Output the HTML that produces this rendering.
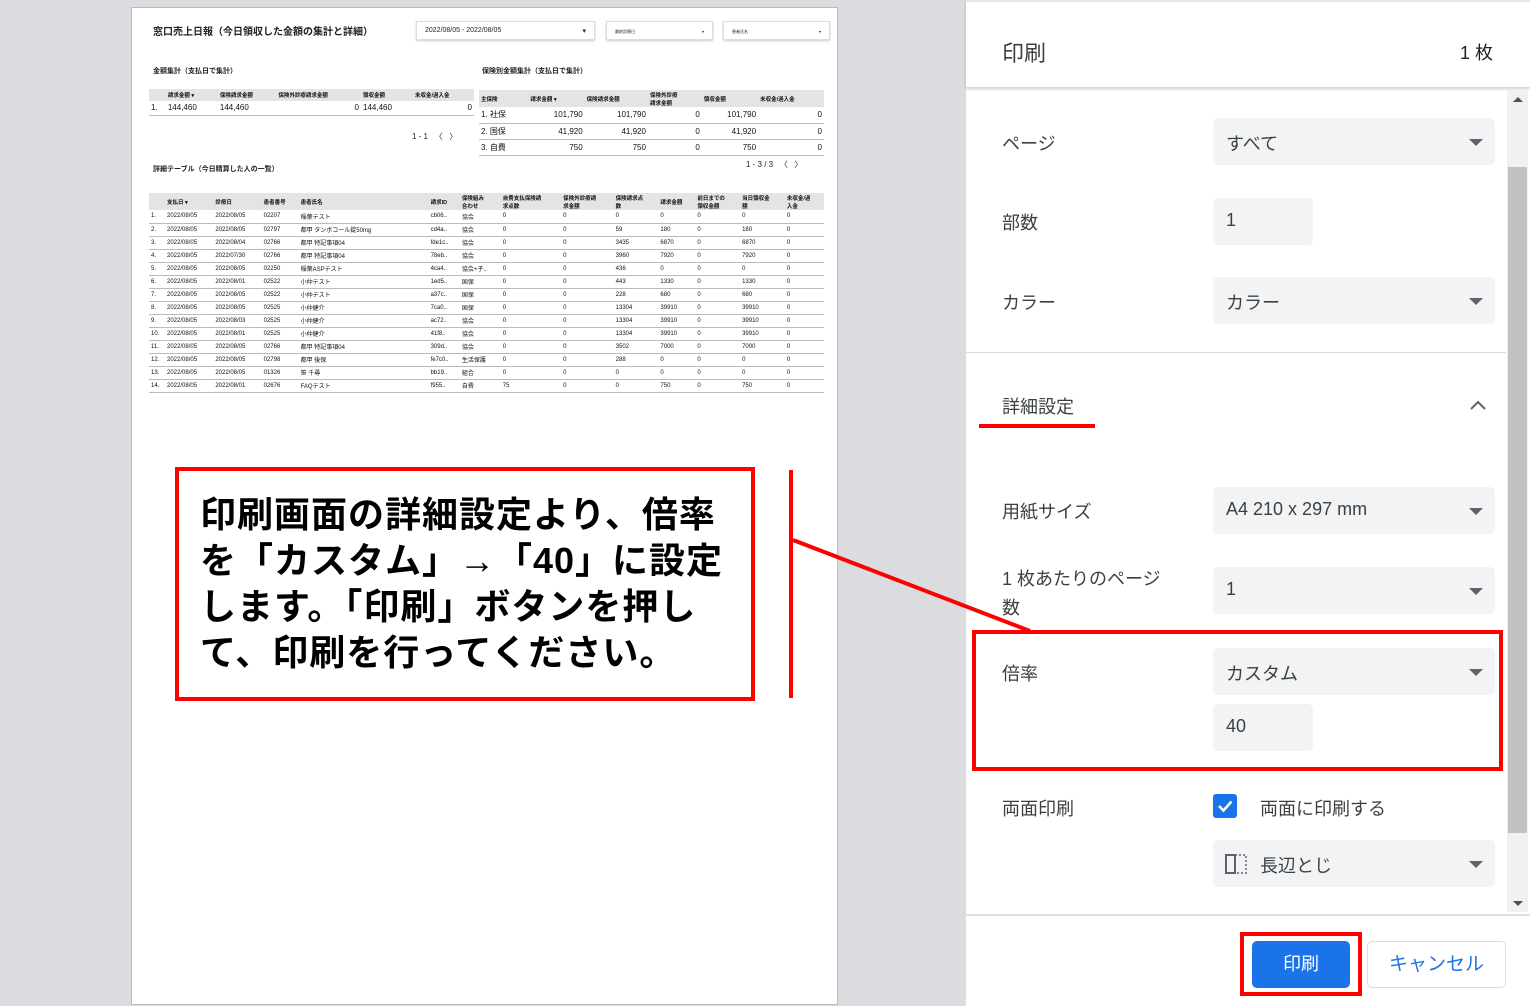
<!DOCTYPE html>
<html><head><meta charset="utf-8">
<style>
*{margin:0;padding:0;box-sizing:border-box}
body{width:1530px;height:1006px;background:#dadce0;position:relative;overflow:hidden;font-family:"Liberation Sans","Noto Sans CJK JP",sans-serif;color:#202124}
.abs{position:absolute}
#page{left:131px;top:7px;width:707px;height:998px;background:#fff;border:1px solid #bbb}
.t{font-size:7px;color:#222;position:absolute;white-space:nowrap}
table{border-collapse:collapse;font-size:6.5px;position:absolute;font-family:"Liberation Sans","Noto Sans CJK JP",sans-serif;color:#111}
td,th{padding:0 2px;white-space:nowrap;text-align:left}
th{background:#e4e4e4;font-weight:bold;font-size:5.5px}
tr.r td{border-bottom:1px solid #bbb}
#panel{left:966px;top:0;width:564px;height:1006px;background:#fff}
.lab{position:absolute;left:1002px;font-size:18px;color:#3c4043}
.sel{position:absolute;left:1213px;width:282px;height:47px;background:#f1f3f4;border-radius:5px;font-size:18px;color:#3c4043;padding:12px 0 0 13px}
.sel.dd:after{content:"";position:absolute;right:12px;top:21px;border-left:7px solid transparent;border-right:7px solid transparent;border-top:7px solid #5f6368}
.red{position:absolute;border:4px solid #f00}
</style></head><body>
<div id="page" class="abs"></div>
<div class="t" style="left:153px;top:23px;font-size:10px;font-weight:bold">窓口売上日報（今日領収した金額の集計と詳細）</div>
<div class="abs" style="left:416px;top:21px;width:179px;height:19px;border:1px solid #ddd;box-shadow:0 1px 2px #ccc;font-size:7px;padding:5px 8px">2022/08/05 - 2022/08/05<span style="float:right">▾</span></div>
<div class="abs" style="left:606px;top:21px;width:107px;height:19px;border:1px solid #ddd;box-shadow:0 1px 2px #ccc;font-size:4px;padding:7px 8px">最終診療日 <span style="float:right">▾</span></div>
<div class="abs" style="left:723px;top:21px;width:107px;height:19px;border:1px solid #ddd;box-shadow:0 1px 2px #ccc;font-size:4px;padding:7px 8px">患者氏名 <span style="float:right">▾</span></div>
<div class="t" style="left:153px;top:66px;font-weight:bold">金額集計（支払日で集計）</div>
<div class="t" style="left:482px;top:66px;font-weight:bold">保険別金額集計（支払日で集計）</div>
<table style="left:149px;top:89px;width:325px">
<tr><th style="height:12px"></th><th>請求金額 ▾</th><th>保険請求金額</th><th>保険外診療請求金額</th><th>領収金額</th><th>未収金/過入金</th></tr>
<tr class="r"><td style="height:14px;font-size:8px">1.</td><td style="font-size:8px">144,460</td><td style="font-size:8px">144,460</td><td style="font-size:8px;text-align:right">0</td><td style="font-size:8px">144,460</td><td style="font-size:8px;text-align:right">0</td></tr></table>
<div class="t" style="left:412px;top:131px;font-size:8px">1 - 1 &nbsp; 〈 &nbsp; 〉</div>
<table style="left:479px;top:90px;width:345px;font-size:8px">
<tr><th style="height:17px">主保険</th><th>請求金額 ▾</th><th>保険請求金額</th><th>保険外診療<br>請求金額</th><th>領収金額</th><th>未収金/過入金</th></tr>
<tr class="r"><td style="height:16px;font-size:8px">1. 社保</td><td style="text-align:right;font-size:8px">101,790</td><td style="text-align:right;font-size:8px">101,790</td><td style="text-align:right;font-size:8px">0</td><td style="text-align:right;font-size:8px">101,790</td><td style="text-align:right;font-size:8px">0</td></tr>
<tr class="r"><td style="height:16px;font-size:8px">2. 国保</td><td style="text-align:right;font-size:8px">41,920</td><td style="text-align:right;font-size:8px">41,920</td><td style="text-align:right;font-size:8px">0</td><td style="text-align:right;font-size:8px">41,920</td><td style="text-align:right;font-size:8px">0</td></tr>
<tr class="r"><td style="height:16px;font-size:8px">3. 自費</td><td style="text-align:right;font-size:8px">750</td><td style="text-align:right;font-size:8px">750</td><td style="text-align:right;font-size:8px">0</td><td style="text-align:right;font-size:8px">750</td><td style="text-align:right;font-size:8px">0</td></tr></table>
<div class="t" style="left:746px;top:159px;font-size:8px">1 - 3 / 3 &nbsp; 〈 &nbsp; 〉</div>
<div class="t" style="left:153px;top:164px;font-weight:bold">詳細テーブル（今日精算した人の一覧）</div>
<table style="left:149px;top:193px;width:675px;font-size:6px">
<tr><th style="height:17px;width:16px"></th><th>支払日 ▾</th><th>診療日</th><th>患者番号</th><th style="width:130px">患者氏名</th><th>請求ID</th><th>保険組み<br>合わせ</th><th>自費支払保険請<br>求点数</th><th>保険外診療請<br>求金額</th><th>保険請求点<br>数</th><th>請求金額</th><th>前日までの<br>領収金額</th><th>当日領収金<br>額</th><th>未収金/過<br>入金</th></tr>
<tr class="r"><td style="height:13px">1.</td><td>2022/08/05</td><td>2022/08/05</td><td>02207</td><td>稲葉テスト</td><td>cb06..</td><td>協会</td><td>0</td><td>0</td><td>0</td><td>0</td><td>0</td><td>0</td><td>0</td></tr>
<tr class="r"><td style="height:13px">2.</td><td>2022/08/05</td><td>2022/08/05</td><td>02797</td><td>都甲 タンボコール錠50mg</td><td>cd4a..</td><td>協会</td><td>0</td><td>0</td><td>59</td><td>180</td><td>0</td><td>180</td><td>0</td></tr>
<tr class="r"><td style="height:13px">3.</td><td>2022/08/05</td><td>2022/08/04</td><td>02766</td><td>都甲 特記事項04</td><td>fde1c..</td><td>協会</td><td>0</td><td>0</td><td>3435</td><td>6870</td><td>0</td><td>6870</td><td>0</td></tr>
<tr class="r"><td style="height:13px">4.</td><td>2022/08/05</td><td>2022/07/30</td><td>02766</td><td>都甲 特記事項04</td><td>78eb..</td><td>協会</td><td>0</td><td>0</td><td>3960</td><td>7920</td><td>0</td><td>7920</td><td>0</td></tr>
<tr class="r"><td style="height:13px">5.</td><td>2022/08/05</td><td>2022/08/05</td><td>02250</td><td>稲葉ASPテスト</td><td>4ca4..</td><td>協会+子..</td><td>0</td><td>0</td><td>436</td><td>0</td><td>0</td><td>0</td><td>0</td></tr>
<tr class="r"><td style="height:13px">6.</td><td>2022/08/05</td><td>2022/08/01</td><td>02522</td><td>小仲テスト</td><td>1ed5..</td><td>国保</td><td>0</td><td>0</td><td>443</td><td>1330</td><td>0</td><td>1330</td><td>0</td></tr>
<tr class="r"><td style="height:13px">7.</td><td>2022/08/05</td><td>2022/08/05</td><td>02522</td><td>小仲テスト</td><td>a37c..</td><td>国保</td><td>0</td><td>0</td><td>228</td><td>680</td><td>0</td><td>680</td><td>0</td></tr>
<tr class="r"><td style="height:13px">8.</td><td>2022/08/05</td><td>2022/08/05</td><td>02525</td><td>小仲健介</td><td>7ca0..</td><td>国保</td><td>0</td><td>0</td><td>13304</td><td>39910</td><td>0</td><td>39910</td><td>0</td></tr>
<tr class="r"><td style="height:13px">9.</td><td>2022/08/05</td><td>2022/08/03</td><td>02525</td><td>小仲健介</td><td>ac72..</td><td>協会</td><td>0</td><td>0</td><td>13304</td><td>39910</td><td>0</td><td>39910</td><td>0</td></tr>
<tr class="r"><td style="height:13px">10.</td><td>2022/08/05</td><td>2022/08/01</td><td>02525</td><td>小仲健介</td><td>41f8..</td><td>協会</td><td>0</td><td>0</td><td>13304</td><td>39910</td><td>0</td><td>39910</td><td>0</td></tr>
<tr class="r"><td style="height:13px">11.</td><td>2022/08/05</td><td>2022/08/05</td><td>02766</td><td>都甲 特記事項04</td><td>309d..</td><td>協会</td><td>0</td><td>0</td><td>3502</td><td>7000</td><td>0</td><td>7000</td><td>0</td></tr>
<tr class="r"><td style="height:13px">12.</td><td>2022/08/05</td><td>2022/08/05</td><td>02798</td><td>都甲 後保</td><td>fe7c0..</td><td>生活保護</td><td>0</td><td>0</td><td>288</td><td>0</td><td>0</td><td>0</td><td>0</td></tr>
<tr class="r"><td style="height:13px">13.</td><td>2022/08/05</td><td>2022/08/05</td><td>01326</td><td>笹 千尋</td><td>bb19..</td><td>組合</td><td>0</td><td>0</td><td>0</td><td>0</td><td>0</td><td>0</td><td>0</td></tr>
<tr class="r"><td style="height:13px">14.</td><td>2022/08/05</td><td>2022/08/01</td><td>02676</td><td>FAQテスト</td><td>f955..</td><td>自費</td><td>75</td><td>0</td><td>0</td><td>750</td><td>0</td><td>750</td><td>0</td></tr>
</table>

<div class="red" style="left:175px;top:467px;width:580px;height:234px;background:#fff"></div>
<div class="abs" style="left:200px;top:492px;width:540px;font-size:36px;font-weight:bold;line-height:46px;color:#000;letter-spacing:1px">印刷画面の詳細設定より、倍率を「カスタム」→「40」に設定します。「印刷」ボタンを押して、印刷を行ってください。</div>
<div class="abs" style="left:789px;top:470px;width:4px;height:228px;background:#f00"></div>

<div id="panel" class="abs"></div>
<div class="abs" style="left:966px;top:0;width:564px;height:87px;background:#fff;box-shadow:0 2px 3px rgba(0,0,0,.2);border-top:2px solid #e5e5e5"></div>
<div class="abs" style="left:1002px;top:36px;font-size:22px;color:#3c4043">印刷</div>
<div class="abs" style="left:1460px;top:39px;font-size:18px;color:#202124">1 枚</div>
<div class="abs" style="left:1507px;top:90px;width:21px;height:822px;background:#f1f1f1"></div>
<div class="abs" style="left:1508px;top:167px;width:19px;height:666px;background:#c1c1c1"></div>
<div class="abs" style="left:1513px;top:97px;border-left:5px solid transparent;border-right:5px solid transparent;border-bottom:5px solid #505050"></div>
<div class="abs" style="left:1513px;top:901px;border-left:5px solid transparent;border-right:5px solid transparent;border-top:5px solid #505050"></div>

<div class="lab" style="top:130px">ページ</div><div class="sel dd" style="top:118px">すべて</div>
<div class="lab" style="top:209px">部数</div><div class="sel" style="top:198px;width:100px">1</div>
<div class="lab" style="top:289px">カラー</div><div class="sel dd" style="top:277px">カラー</div>
<div class="abs" style="left:966px;top:352px;width:540px;height:1px;background:#dadce0"></div>
<div class="lab" style="top:393px">詳細設定</div>
<div class="abs" style="left:979px;top:424px;width:116px;height:4px;background:#f00"></div>
<svg class="abs" style="left:1468px;top:398px" width="20" height="14"><path d="M3 11 L10 4 L17 11" fill="none" stroke="#5f6368" stroke-width="2"/></svg>
<div class="lab" style="top:498px">用紙サイズ</div><div class="sel dd" style="top:487px">A4 210 x 297 mm</div>
<div class="lab" style="top:565px;line-height:29px">1 枚あたりのページ<br>数</div><div class="sel dd" style="top:567px">1</div>
<div class="lab" style="top:660px">倍率</div><div class="sel dd" style="top:648px">カスタム</div>
<div class="sel" style="top:704px;width:100px">40</div>
<div class="red" style="left:972px;top:630px;width:531px;height:141px"></div>
<div class="lab" style="top:795px">両面印刷</div>
<div class="abs" style="left:1213px;top:794px;width:24px;height:24px;background:#1a73e8;border-radius:3px"></div>
<svg class="abs" style="left:1213px;top:794px" width="24" height="24"><path d="M6 12 L10.5 16.5 L18.5 7.5" fill="none" stroke="#fff" stroke-width="2.5"/></svg>
<div class="abs" style="left:1260px;top:795px;font-size:18px;color:#3c4043">両面に印刷する</div>
<div class="sel dd" style="top:840px;padding-left:47px">長辺とじ</div>
<svg class="abs" style="left:1224px;top:852px" width="26" height="24"><rect x="2" y="3" width="9" height="18" fill="none" stroke="#5f6368" stroke-width="2"/><path d="M11 3H22V21H11" fill="none" stroke="#5f6368" stroke-width="1.5" stroke-dasharray="2 2"/></svg>
<div class="abs" style="left:966px;top:914px;width:564px;height:2px;background:#e0e0e0"></div>
<div class="abs" style="left:1252px;top:941px;width:98px;height:47px;background:#1a73e8;border-radius:5px;color:#fff;font-size:18px;text-align:center;line-height:47px">印刷</div>
<div class="red" style="left:1240px;top:932px;width:122px;height:64px"></div>
<div class="abs" style="left:1367px;top:941px;width:139px;height:47px;border:1px solid #dadce0;border-radius:5px;color:#1a73e8;font-size:19px;text-align:center;line-height:45px">キャンセル</div>
<svg class="abs" style="left:0;top:0" width="1530" height="1006"><line x1="793" y1="540" x2="1030" y2="631" stroke="#f00" stroke-width="4"/></svg>
</body></html>
